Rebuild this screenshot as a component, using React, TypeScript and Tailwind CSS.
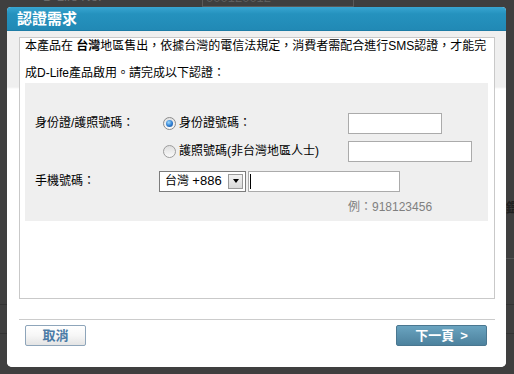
import React from "react";

function Radio({ checked }: { checked?: boolean }) {
  if (checked) {
    return (
      <span className="flex w-[13px] h-[13px] shrink-0 items-center justify-center rounded-full border border-[#8b8b8b] bg-[linear-gradient(#e2e2e2,#fbfbfb)]">
        <span className="block w-[7px] h-[7px] rounded-full bg-[radial-gradient(circle_at_40%_35%,#9fdcff_0%,#2d7bd0_55%,#1a4f8e_100%)]" />
      </span>
    );
  }
  return (
    <span className="block w-[13px] h-[13px] shrink-0 rounded-full border border-[#9c9c9c] bg-[linear-gradient(#dedede,#fafafa)]" />
  );
}

export default function App() {
  return (
    <div className="relative w-[514px] h-[374px] overflow-hidden bg-[#3f3f3f] pl-[7px] pt-[7px] font-['Liberation_Sans','Noto_Sans_CJK_TC',sans-serif] text-[12px] text-black">
      {/* faint page behind the overlay */}
      <div className="absolute left-[43px] top-[-10px] text-[13px] leading-[14px] text-[#6c6c6c]">D-Life No.</div>
      <div className="absolute left-[202px] top-[-12px] w-[152px] h-[19px] border border-[#5a5a5a] pl-[3px] text-[13px] leading-[17px] text-[#5e5e5e]">000120012</div>
      <div className="absolute left-0 top-[304px] w-[514px] h-px bg-[#333333]" />
      <div className="absolute left-0 top-[333px] w-[514px] h-px bg-[#333333]" />
      <div className="absolute left-[506px] top-[201px] text-[13px] font-bold leading-[14px] text-[#1f1f1f]">鑑</div>
      <div className="absolute left-[506px] top-[258px] w-[8px] h-px bg-[#555555]" />

      <div className="relative flex w-[499px] h-[360px] flex-col overflow-hidden rounded-t-[4px] rounded-b-[5px] bg-white">
        <div className="h-[24px] shrink-0 border-b border-[#1d7ca6] bg-[linear-gradient(#38a6d2,#2592be_30%,#2189b5)] pl-[10px] text-[15px] font-bold leading-[23px] text-white">
          認證需求
        </div>
        <div className="flex flex-1 flex-col bg-[linear-gradient(#efefef_0px,#efefef_56px,#ffffff_58px)] px-[12px] pt-[6px]">
          <div className="w-[476px] h-[262px] shrink-0 border border-[#c9c9c9] bg-white px-[5px] pt-[1px]">
            <div className="whitespace-nowrap leading-[14px]">
              本產品在 <span className="font-bold">台灣</span>地區售出，依據台灣的電信法規定，消費者需配合進行SMS認證，才能完
            </div>
            <div className="mt-[13px] whitespace-nowrap leading-[14px]">成D-Life產品啟用。請完成以下認證：</div>

            <div className="mt-[3px] w-[463px] h-[138px] bg-[#efefef] pl-[10px] pt-[30px]">
              <div className="flex h-[20px] items-center">
                <div className="w-[128px] whitespace-nowrap">身份證/護照號碼：</div>
                <div className="flex w-[185px] items-center gap-[3px] whitespace-nowrap">
                  <Radio checked />
                  <span>身份證號碼：</span>
                </div>
                <div className="w-[94px] h-[21px] border border-[#ababab] bg-white" />
              </div>

              <div className="mt-[8px] flex h-[20px] items-center">
                <div className="w-[128px]" />
                <div className="flex w-[185px] items-center gap-[3px] whitespace-nowrap">
                  <Radio />
                  <span>護照號碼(非台灣地區人士)</span>
                </div>
                <div className="w-[124px] h-[21px] border border-[#ababab] bg-white" />
              </div>

              <div className="mt-[10px] flex h-[20px] items-center">
                <div className="w-[124px] whitespace-nowrap">手機號碼：</div>
                <div className="flex w-[87px] h-[21px] items-center justify-between border border-[#7c7c7c] bg-white pl-[5px] pr-[2px]">
                  <span className="whitespace-nowrap text-[12px] leading-[14px]">
                    台灣 <span className="text-[13px]">+886</span>
                  </span>
                  <span className="flex w-[15px] h-[15px] items-center justify-center border border-[#9a9a9a] bg-[linear-gradient(#f2f2f2,#d9d9d9)]">
                    <span className="block h-0 w-0 border-x-[3.5px] border-t-[4px] border-x-transparent border-t-black" />
                  </span>
                </div>
                <div className="ml-[2px] flex w-[152px] h-[21px] items-center border border-[#ababab] bg-white pl-[1px]">
                  <span className="block w-px h-[15px] bg-black" />
                </div>
              </div>

              <div className="mt-[8px] pl-[313px] leading-[16px] text-[#808080] whitespace-nowrap">例：918123456</div>
            </div>
          </div>

          <div className="mt-[20px] h-px w-[476px] shrink-0 bg-[#cccccc]" />

          <div className="mt-[5px] flex w-[476px] justify-between pl-[6px] pr-[8px]">
            <div className="flex w-[61px] h-[21px] items-center justify-center rounded-[2px] border border-[#8ea5ba] bg-[linear-gradient(#ffffff,#f6f6f6_50%,#e4e4e4)] text-[13px] font-bold text-[#4a7ba6]">
              取消
            </div>
            <div className="flex w-[91px] h-[21px] items-center justify-center gap-[6px] rounded-[2px] border border-[#4a7790] bg-[linear-gradient(#6aa4c0,#5b92ae_50%,#4d829e)] text-[13px] font-bold text-white">
              <span>下一頁</span>
              <span>&gt;</span>
            </div>
          </div>
        </div>
      </div>
    </div>
  );
}
